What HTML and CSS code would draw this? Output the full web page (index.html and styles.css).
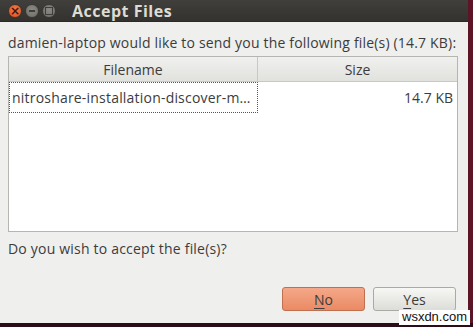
FILE: index.html
```html
<!DOCTYPE html>
<html>
<head>
<meta charset="utf-8">
<link rel="stylesheet" href="styles.css">
</head>
<body>
<div class="screen">
  <div class="window">
    <div class="titlebar">
      <div class="wbtns">
        <span class="wbtn close">×</span>
        <span class="wbtn min"><span class="bar"></span></span>
        <span class="wbtn max"><span class="sq"></span></span>
      </div>
      <div class="title">Accept Files</div>
    </div>
    <div class="content">
      <div class="label">damien-laptop would like to send you the following file(s) (14.7 KB):</div>
      <div class="table">
        <div class="thead">
          <div class="th c1">Filename</div>
          <div class="th c2">Size</div>
        </div>
        <div class="row">
          <div class="td c1 focus">nitroshare-installation-discover-m…</div>
          <div class="td c2 num">14.7 KB</div>
        </div>
      </div>
      <div class="question">Do you wish to accept the file(s)?</div>
      <div class="actions">
        <button class="btn primary"><u>N</u>o</button>
        <button class="btn"><u>Y</u>es</button>
      </div>
    </div>
  </div>
  <div class="rightedge"></div>
</div>
<div class="watermark">wsxdn.com</div>
</body>
</html>
```
FILE: styles.css
```css
html, body {
  margin: 0;
  padding: 0;
  width: 473px;
  height: 327px;
  overflow: hidden;
  background: #2a0d18;
  font-family: "Open Sans", "Noto Sans", sans-serif;
}
.screen {
  display: flex;
  height: 323px;
}
.window {
  width: 468px;
  display: flex;
  flex-direction: column;
  background: #efefed;
}
.rightedge {
  flex: 1;
  background: #5b1526;
}
.titlebar {
  height: 21px;
  background: linear-gradient(#403f3b, #33322e);
  display: flex;
  align-items: center;
  border-bottom: 1px solid #2b2a27;
}
.wbtns {
  display: flex;
  gap: 3px;
  margin-left: 8px;
}
.wbtn {
  width: 14px;
  height: 14px;
  border-radius: 50%;
  display: flex;
  align-items: center;
  justify-content: center;
  box-sizing: border-box;
}
.close {
  background: radial-gradient(circle at 50% 40%, #f7774a, #e1501d);
  color: #3a1a0e;
  font: bold 12px "DejaVu Sans", sans-serif;
  line-height: 14px;
  border: 1px solid #40362c;
}
.min, .max {
  background: radial-gradient(circle at 50% 40%, #8a8983, #6d6c67);
  border: 1px solid #3a3935;
}
.bar {
  width: 6px;
  height: 2px;
  background: #3e3d39;
}
.sq {
  width: 6px;
  height: 6px;
  border: 1px solid #3e3d39;
}
.title {
  margin-left: 16px;
  color: #dfdbd2;
  font-weight: bold;
  font-size: 16px;
  letter-spacing: 0.5px;
}
.content {
  flex: 1;
  display: flex;
  flex-direction: column;
  padding: 0 10px 0 8px;
  color: #3c3c3c;
  font-size: 14px;
}
.label {
  margin-top: 13px;
  height: 16px;
  line-height: 16px;
  white-space: nowrap;
  letter-spacing: 0.18px;
}
.table {
  margin-top: 5px;
  height: 174px;
  border: 1px solid #b5b5b2;
  background: #ffffff;
}
.thead {
  display: flex;
  height: 24px;
  background: linear-gradient(#f0f0ee, #e1e1de);
  border-bottom: 1px solid #c8c8c5;
}
.th {
  display: flex;
  align-items: center;
  justify-content: center;
}
.c1 {
  width: 249px;
  box-sizing: border-box;
}
.th.c1 {
  border-right: 1px solid #c8c8c5;
}
.c2 {
  flex: 1;
}
.row {
  display: flex;
  height: 31px;
}
.td {
  display: flex;
  align-items: center;
  padding: 0 4px;
  white-space: nowrap;
  box-sizing: border-box;
}
.td.c1 {
  border: 1px dotted #555;
  padding-left: 2px;
  letter-spacing: 0.2px;
}
.num {
  justify-content: flex-end;
}
.question {
  margin-top: 9px;
  height: 16px;
  line-height: 16px;
  letter-spacing: 0.2px;
}
.actions {
  margin-top: 30px;
  display: flex;
  justify-content: flex-end;
  gap: 8px;
  padding-right: 2px;
}
.btn {
  width: 83px;
  height: 24px;
  border-radius: 3px;
  border: 1px solid #a9a9a5;
  background: linear-gradient(#f7f7f5, #dcdcd8);
  font-family: inherit;
  font-size: 14px;
  color: #3c3c3c;
  padding: 0;
}
.btn.primary {
  border-color: #c0704e;
  background: linear-gradient(#f5a889, #ea8a63);
}
.btn u {
  text-underline-offset: 3px;
}
.watermark {
  position: absolute;
  left: 399px;
  top: 310px;
  padding: 0 3px;
  height: 15px;
  line-height: 14px;
  background: #ffffff;
  color: #111;
  font-family: "Liberation Sans", sans-serif;
  font-size: 13px;
}
```
